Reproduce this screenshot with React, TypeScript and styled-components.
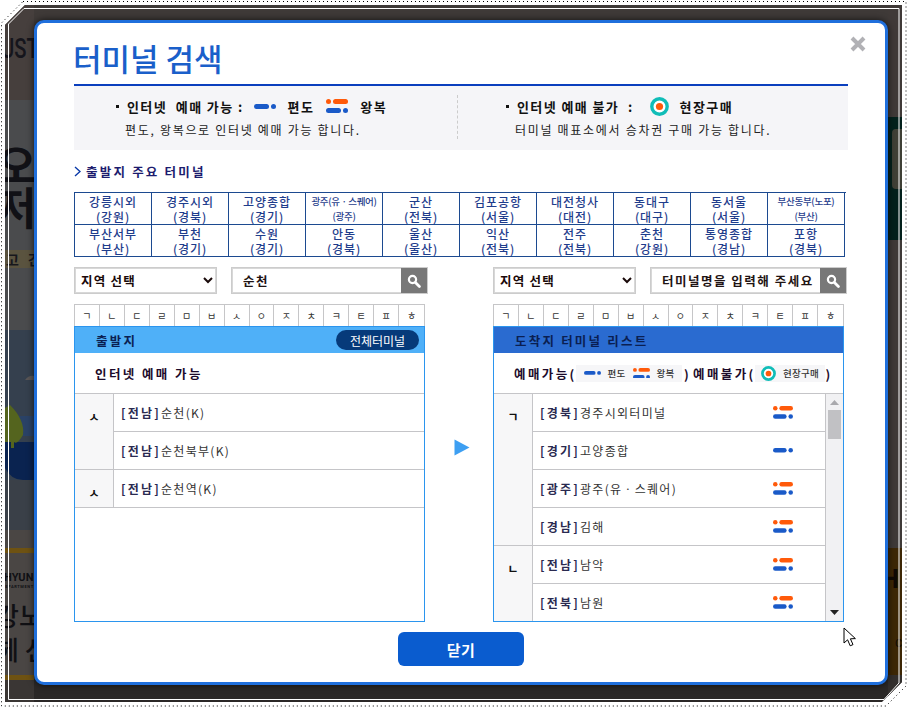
import React from 'react';
import styled, { createGlobalStyle } from 'styled-components';

const GlobalStyle = createGlobalStyle`
  html, body {
    margin: 0;
    padding: 0;
    background: #fff;
    overflow: hidden;
  }
  * {
    box-sizing: border-box;
  }
  body, select, input, button {
    font-family: 'Noto Sans CJK KR', 'Noto Sans', sans-serif;
  }
`;

const BLUE = '#1a5ac8';
const ORANGE = '#ff5a0a';

const originGrid = [
  ['강릉시외', '(강원)'],
  ['경주시외', '(경북)'],
  ['고양종합', '(경기)'],
  ['광주(유ㆍ스퀘어)', '(광주)', 'small'],
  ['군산', '(전북)'],
  ['김포공항', '(서울)'],
  ['대전청사', '(대전)'],
  ['동대구', '(대구)'],
  ['동서울', '(서울)'],
  ['부산동부(노포)', '(부산)', 'small'],
  ['부산서부', '(부산)'],
  ['부천', '(경기)'],
  ['수원', '(경기)'],
  ['안동', '(경북)'],
  ['울산', '(울산)'],
  ['익산', '(전북)'],
  ['전주', '(전북)'],
  ['춘천', '(강원)'],
  ['통영종합', '(경남)'],
  ['포항', '(경북)'],
];

const consonants = ['ㄱ', 'ㄴ', 'ㄷ', 'ㄹ', 'ㅁ', 'ㅂ', 'ㅅ', 'ㅇ', 'ㅈ', 'ㅊ', 'ㅋ', 'ㅌ', 'ㅍ', 'ㅎ'];

const departures = [
  { letter: 'ㅅ', rows: [['[전남]', '순천(K)'], ['[전남]', '순천북부(K)']] },
  { letter: 'ㅅ', rows: [['[전남]', '순천역(K)']] },
];

const arrivals = [
  {
    letter: 'ㄱ',
    rows: [
      ['[경북]', '경주시외터미널', 'both'],
      ['[경기]', '고양종합', 'one'],
      ['[광주]', '광주(유ㆍ스퀘어)', 'both'],
      ['[경남]', '김해', 'both'],
    ],
  },
  {
    letter: 'ㄴ',
    rows: [
      ['[전남]', '남악', 'both'],
      ['[전북]', '남원', 'both'],
    ],
  },
];

const OneWayIcon = ({ width = 22 }: { width?: number }) => (
  <svg width={width} height={(width * 5) / 22} viewBox="0 0 22 5">
    <rect x="0" y="0" width="15" height="5" rx="2.5" fill={BLUE} />
    <circle cx="19.5" cy="2.5" r="2.5" fill={BLUE} />
  </svg>
);

const RoundTripIcon = ({ width = 22 }: { width?: number }) => (
  <svg width={width} height={(width * 14) / 22} viewBox="0 0 22 14">
    <circle cx="2.5" cy="2.5" r="2.5" fill={ORANGE} />
    <rect x="7" y="0" width="15" height="5" rx="2.5" fill={ORANGE} />
    <rect x="0" y="9" width="15" height="5" rx="2.5" fill={BLUE} />
    <circle cx="19.5" cy="11.5" r="2.5" fill={BLUE} />
  </svg>
);

const OnSiteIcon = ({ size = 19 }: { size?: number }) => (
  <svg width={size} height={size} viewBox="0 0 19 19">
    <circle cx="9.5" cy="9.5" r="7.7" fill="#fff" stroke="#10bdb8" strokeWidth="3.4" />
    <circle cx="9.5" cy="9.5" r="3.6" fill={ORANGE} />
  </svg>
);

const SearchIcon = () => (
  <svg width="14" height="14" viewBox="0 0 14 14">
    <circle cx="5.5" cy="5.5" r="3.6" fill="none" stroke="#fff" strokeWidth="2.2" />
    <path d="M8.4 8.4 L12.4 12.4" stroke="#fff" strokeWidth="2.8" strokeLinecap="round" />
  </svg>
);

export default function App() {
  return (
    <Page>
      <GlobalStyle />
      <Frame>
        <SideStrip>
          <Band $h={95} $bg="#463f3d">
            <UstText>UST</UstText>
          </Band>
          <Band $h={150} $bg="#4a4b4d">
            <BigGlyph $top={38}>오</BigGlyph>
            <BigGlyph $top={-10}>저</BigGlyph>
          </Band>
          <Band $h={18} $bg="#5a533f">
            <TinyGlyph>고 간</TinyGlyph>
          </Band>
          <Band $h={62} $bg="#4a4b4d" />
          <Band $h={150} $bg="#35404e">
            <svg width="29" height="150" viewBox="0 0 29 150">
              <rect x="0" y="86" width="29" height="20" fill="#2a4266" />
              <path d="M0 112 H29 V150 H18 Q6 150 0 138 Z" fill="#0a2350" />
              <path d="M5 75 Q20 90 18 105 Q12 115 9 112 L9 118 H6 L6 112 H0 V78 Z" fill="#54641e" />
              <path d="M20 50 Q24 45 29 46 V50 Z" fill="#5a5656" />
            </svg>
          </Band>
          <Band $h={50} $bg="#3a4048" />
          <Band $h={150} $bg="#4a4644">
            <GoldLine />
            <HyunText>HYUN</HyunText>
            <DeptText>DEPARTMENT</DeptText>
            <BigKorean>강노</BigKorean>
            <BigKorean>헤 선</BigKorean>
            <GoldLine $bottom />
          </Band>
          <Band $h={22} $bg="#3a3634" />
        </SideStrip>
        <Modal>
          <CloseButton aria-label="닫기">
            <svg width="16" height="16" viewBox="0 0 16 16">
              <path d="M2 2 L14 14 M14 2 L2 14" stroke="#b1b1b5" strokeWidth="4" />
            </svg>
          </CloseButton>
          <Title>터미널 검색</Title>
          <InfoBand>
            <InfoColumn $pad={42}>
              <InfoHead>
                <Dot />
                <strong>인터넷 &nbsp;예매 가능 :</strong>
                <OneWayIcon />
                <strong>편도</strong>
                <RoundTripIcon />
                <strong>왕복</strong>
              </InfoHead>
              <InfoSub>편도, 왕복으로 인터넷 예매 가능 합니다.</InfoSub>
            </InfoColumn>
            <InfoColumn $pad={49} $divided>
              <InfoHead>
                <Dot />
                <strong>인터넷 예매 불가 &nbsp;:</strong>
                <IconGap>
                  <OnSiteIcon />
                </IconGap>
                <strong>현장구매</strong>
              </InfoHead>
              <InfoSub>터미널 매표소에서 승차권 구매 가능 합니다.</InfoSub>
            </InfoColumn>
          </InfoBand>
          <SectionLabel>
            <svg width="7" height="11" viewBox="0 0 7 11">
              <path d="M1 1 L6 5.5 L1 10" fill="none" stroke="#0b3aa8" strokeWidth="1.4" />
            </svg>
            출발지 주요 터미널
          </SectionLabel>
          <TerminalGrid>
            {originGrid.map(([name, region, small]) => (
              <TerminalCell key={name} $small={!!small}>
                <span>{name}</span>
                <span>{region}</span>
              </TerminalCell>
            ))}
          </TerminalGrid>
          <SearchRow>
            <SearchGroup>
              <RegionSelect defaultValue="">
                <option value="">지역 선택</option>
              </RegionSelect>
              <SearchBox>
                <SearchInput defaultValue="순천" />
                <SearchButton aria-label="검색">
                  <SearchIcon />
                </SearchButton>
              </SearchBox>
            </SearchGroup>
            <span />
            <SearchGroup>
              <RegionSelect defaultValue="">
                <option value="">지역 선택</option>
              </RegionSelect>
              <SearchBox>
                <SearchInput defaultValue="터미널명을 입력해 주세요" />
                <SearchButton aria-label="검색">
                  <SearchIcon />
                </SearchButton>
              </SearchBox>
            </SearchGroup>
          </SearchRow>
          <Panels>
            <Panel>
              <ConsonantRow>
                {consonants.map((c) => (
                  <ConsonantCell key={c}>{c}</ConsonantCell>
                ))}
              </ConsonantRow>
              <PanelBody>
                <PanelHeader $bg="#4fb0f8">
                  출발지
                  <AllButton>전체터미널</AllButton>
                </PanelHeader>
                <SubHeader>인터넷 예매 가능</SubHeader>
                {departures.map((group, i) => (
                  <LetterGroup key={i}>
                    <LetterCell>{group.letter}</LetterCell>
                    <div>
                      {group.rows.map(([region, name]) => (
                        <TerminalRow key={name}>
                          <span>
                            <b>{region}</b>
                            {name}
                          </span>
                        </TerminalRow>
                      ))}
                    </div>
                  </LetterGroup>
                ))}
              </PanelBody>
            </Panel>
            <ArrowColumn>
              <svg width="16" height="17" viewBox="0 0 16 17">
                <path d="M0.5 0.5 L15.5 8.5 L0.5 16.5 Z" fill="#3d9ff2" />
              </svg>
            </ArrowColumn>
            <Panel>
              <ConsonantRow>
                {consonants.map((c) => (
                  <ConsonantCell key={c}>{c}</ConsonantCell>
                ))}
              </ConsonantRow>
              <PanelBody>
                <PanelHeader $bg="#2a6bd0">도착지 터미널 리스트</PanelHeader>
                <LegendHeader>
                  <LegendText $w={62}>예매가능(</LegendText>
                  <LegendPill $w={106}>
                    <OneWayIcon width={17} />
                    <em>편도</em>
                    <RoundTripIcon width={17} />
                    <em>왕복</em>
                  </LegendPill>
                  <LegendText $w={11}>)</LegendText>
                  <LegendText $w={62}>예매불가(</LegendText>
                  <LegendPill $w={70}>
                    <OnSiteIcon size={15} />
                    <em>현장구매</em>
                  </LegendPill>
                  <LegendText $w={8}>)</LegendText>
                </LegendHeader>
                <ScrollArea>
                  <ScrollList>
                    {arrivals.map((group) => (
                      <LetterGroup key={group.letter}>
                        <LetterCell>{group.letter}</LetterCell>
                        <div>
                          {group.rows.map(([region, name, kind]) => (
                            <TerminalRow key={name} $between>
                              <span>
                                <b>{region}</b>
                                {name}
                              </span>
                              <RowIcon>{kind === 'both' ? <RoundTripIcon width={20} /> : <OneWayIcon width={20} />}</RowIcon>
                            </TerminalRow>
                          ))}
                        </div>
                      </LetterGroup>
                    ))}
                  </ScrollList>
                  <Scrollbar>
                    <svg width="9" height="5" viewBox="0 0 9 5">
                      <path d="M0 5 L4.5 0 L9 5 Z" fill="#a9a9ad" />
                    </svg>
                    <ScrollThumb />
                    <ScrollSpacer />
                    <svg width="9" height="5" viewBox="0 0 9 5">
                      <path d="M0 0 L4.5 5 L9 0 Z" fill="#222" />
                    </svg>
                  </Scrollbar>
                </ScrollArea>
              </PanelBody>
            </Panel>
          </Panels>
          <Footer>
            <CloseAction>닫기</CloseAction>
          </Footer>
          <Cursor viewBox="0 0 14 20" width="14" height="20">
            <path d="M1 1 L1 16 L4.6 12.8 L7.2 18.8 L10 17.6 L7.4 11.8 L12.4 11.6 Z" fill="#fff" stroke="#000" strokeWidth="1" />
          </Cursor>
        </Modal>
        <SideStrip>
          <Band $h={112} $bg="#403a38" />
          <Band $h={123} $bg="#03211c">
            <GreenCard />
          </Band>
          <Band $h={308} $bg="#3f3a38" />
          <Band $h={127} $bg="#3d2705">
            <SideH>H</SideH>
            <SideCo>CO</SideCo>
          </Band>
          <Band $h={27} $bg="#332f2d" />
        </SideStrip>
        <FrameLine viewBox="0 0 897 697" width="897" height="697">
          <path d="M19 3.5 H894 V678 L879 694.5 H3.5 V19 Z" fill="none" stroke="#fff" strokeWidth="1" />
        </FrameLine>
      </Frame>
      <DottedEdge viewBox="0 0 908 708" width="908" height="708">
        <path d="M23 1.5 H906 V686 L886 706 H1.5 V23 Z" fill="none" stroke="#000" strokeWidth="1" strokeDasharray="1 3" />
      </DottedEdge>
    </Page>
  );
}

const Page = styled.div`
  position: relative;
  width: 908px;
  height: 708px;
  padding: 5px;
  overflow: hidden;
  background: #fff;
`;

const DottedEdge = styled.svg`
  position: absolute;
  left: 0;
  top: 0;
  pointer-events: none;
`;

const Frame = styled.div`
  position: relative;
  display: grid;
  grid-template-columns: 29px 854px 14px;
  width: 897px;
  height: 697px;
  background: linear-gradient(#3f3a38 0 50%, #2b2827 50%);
  clip-path: polygon(20px 0, 100% 0, 100% calc(100% - 20px), calc(100% - 20px) 100%, 0 100%, 0 20px);
`;

const FrameLine = styled.svg`
  position: absolute;
  left: 0;
  top: 0;
  z-index: 3;
  pointer-events: none;
`;

const SideStrip = styled.div`
  display: flex;
  flex-direction: column;
  overflow: hidden;
`;

const Band = styled.div<{ $h: number; $bg: string }>`
  position: relative;
  flex: none;
  height: ${(p) => p.$h}px;
  background: ${(p) => p.$bg};
  overflow: hidden;
  color: #17171c;
`;

const UstText = styled.div`
  margin: 26px 0 0 -4px;
  font: 500 28px/36px 'Roboto', sans-serif;
  color: #15151c;
  white-space: nowrap;
  transform: scaleX(0.72);
  transform-origin: left center;
`;

const BigGlyph = styled.div<{ $top: number }>`
  margin: ${(p) => p.$top}px 0 0 -9px;
  font-size: 44px;
  line-height: 52px;
  font-weight: 700;
  color: #111116;
  white-space: nowrap;
`;

const TinyGlyph = styled.div`
  margin-left: 1px;
  font-size: 14px;
  line-height: 18px;
  font-weight: 700;
  letter-spacing: 3px;
  white-space: nowrap;
`;

const GoldLine = styled.div<{ $bottom?: boolean }>`
  height: 5px;
  margin-top: ${(p) => (p.$bottom ? 9 : 18)}px;
  background: #6e5212;
`;

const HyunText = styled.div`
  margin: 19px 0 0 -1px;
  font: 700 11px/12px 'Roboto', sans-serif;
  letter-spacing: 0.2px;
  white-space: nowrap;
  color: #101014;
`;

const DeptText = styled.div`
  margin: 0 0 9px -3px;
  font: 700 4px/5px 'Roboto', sans-serif;
  letter-spacing: 0.6px;
  white-space: nowrap;
  color: #101014;
`;

const BigKorean = styled.div`
  margin-left: -10px;
  font-size: 26px;
  line-height: 34px;
  font-weight: 500;
  white-space: nowrap;
  color: #101014;
`;

const GreenCard = styled.div`
  width: 20px;
  height: 60px;
  margin: 12px 0 0 4px;
  background: #3f4036;
  border-radius: 4px 0 0 4px;
`;

const SideH = styled.div`
  margin: 14px 0 0 -8px;
  font-size: 26px;
  line-height: 30px;
  font-weight: 700;
  color: #0f0a04;
`;

const SideCo = styled.div`
  margin: 46px 0 0 7px;
  font: 400 11px/11px 'Roboto', sans-serif;
  color: #0f0a04;
  white-space: nowrap;
`;

const Modal = styled.div`
  position: relative;
  z-index: 1;
  display: flex;
  flex-direction: column;
  height: 665px;
  margin-top: 15px;
  padding: 0 37px;
  background: #fff;
  border: 3px solid #1f6fdc;
  border-radius: 10px;
  box-shadow: 0 0 7px rgba(0, 0, 0, 0.7);
`;

const CloseButton = styled.button`
  position: absolute;
  right: 19px;
  top: 13px;
  display: flex;
  padding: 0;
  border: 0;
  background: none;
`;

const Title = styled.h1`
  flex: none;
  height: 63px;
  margin: 0;
  padding-top: 12px;
  font-size: 31px;
  line-height: 46px;
  font-weight: 500;
  color: #1a5fca;
  text-indent: -1px;
  border-bottom: 2px solid #0a3fbe;
`;

const InfoBand = styled.div`
  flex: none;
  display: grid;
  grid-template-columns: 383px 391px;
  height: 64px;
  background: #f5f5f8;
`;

const InfoColumn = styled.div<{ $pad: number; $divided?: boolean }>`
  position: relative;
  padding: 8px 0 0 ${(p) => p.$pad}px;

  ${(p) =>
    p.$divided &&
    `&::before {
      content: '';
      position: absolute;
      left: 0;
      top: 9px;
      bottom: 11px;
      border-left: 1px dashed #ccc;
    }`}
`;

const InfoHead = styled.div`
  display: flex;
  align-items: center;
  gap: 12px;
  height: 24px;
  font-size: 13px;
  color: #111;

  > strong {
    font-weight: 700;
    letter-spacing: 1.4px;
    white-space: nowrap;
  }

  > strong:first-of-type {
    margin-right: -2px;
  }
`;

const IconGap = styled.span`
  display: flex;
  margin-left: 6px;
  margin-right: -1px;
`;

const Dot = styled.i`
  width: 3px;
  height: 3px;
  margin-right: -4px;
  background: #111;
`;

const InfoSub = styled.div`
  margin: 3px 0 0 9px;
  font-size: 12px;
  line-height: 18px;
  letter-spacing: 1.7px;
  color: #222;
  white-space: nowrap;
`;

const SectionLabel = styled.div`
  flex: none;
  display: flex;
  align-items: center;
  gap: 5px;
  height: 42px;
  font-size: 12.5px;
  font-weight: 700;
  letter-spacing: 2.2px;
  color: #1c1c6e;
`;

const TerminalGrid = styled.div`
  flex: none;
  display: grid;
  grid-template-columns: repeat(10, 77px);
  grid-auto-rows: 32px;
  width: 772px;
  border-left: 1px solid #1c4a90;
  border-top: 1px solid #1c4a90;
`;

const TerminalCell = styled.div<{ $small: boolean }>`
  display: flex;
  flex-direction: column;
  align-items: center;
  justify-content: center;
  border-right: 1px solid #1c4a90;
  border-bottom: 1px solid #1c4a90;
  font-size: ${(p) => (p.$small ? 9.5 : 12)}px;
  font-weight: 500;
  line-height: 15px;
  letter-spacing: ${(p) => (p.$small ? -0.3 : 0.9)}px;
  color: #1f3d8c;
  white-space: nowrap;
`;

const SearchRow = styled.div`
  flex: none;
  display: grid;
  grid-template-columns: 354px 65px 354px;
  margin-top: 10px;
`;

const SearchGroup = styled.div`
  display: flex;
  justify-content: space-between;
`;

const RegionSelect = styled.select`
  width: 143px;
  height: 27px;
  padding-left: 2px;
  border: 1px solid #ccc;
  box-shadow: inset 0 0 0 1px #d8d8d8;
  background: #fff;
  font-size: 12.5px;
  font-weight: 700;
  letter-spacing: 1.2px;
  color: #1a0a0a;
`;

const SearchBox = styled.div`
  display: flex;
  width: 197px;
  height: 27px;
  border: 1px solid #ccc;
  box-shadow: inset 0 0 0 1px #d8d8d8;
`;

const SearchInput = styled.input`
  flex: 1;
  min-width: 0;
  padding: 0 0 0 11px;
  border: 0;
  outline: 0;
  background: transparent;
  font-size: 12.5px;
  font-weight: 700;
  letter-spacing: 1.5px;
  color: #1f1414;
`;

const SearchButton = styled.button`
  display: flex;
  align-items: center;
  justify-content: center;
  width: 26px;
  padding: 0;
  border: 0;
  background: #787878;
`;

const Panels = styled.div`
  flex: none;
  display: grid;
  grid-template-columns: 351px 68px 351px;
  margin-top: 10px;
`;

const Panel = styled.div`
  display: flex;
  flex-direction: column;
  height: 318px;
`;

const ConsonantRow = styled.div`
  flex: none;
  display: grid;
  grid-template-columns: repeat(14, 1fr);
  height: 22px;
  border: 1px solid #c6c6c8;
  border-bottom: 0;
`;

const ConsonantCell = styled.div`
  display: flex;
  align-items: center;
  justify-content: center;
  border-right: 1px solid #c6c6c8;
  font-size: 10px;
  color: #333;

  &:last-child {
    border-right: 0;
  }
`;

const PanelBody = styled.div`
  flex: 1;
  display: flex;
  flex-direction: column;
  min-height: 0;
  border: 1px solid #2b95ee;
`;

const PanelHeader = styled.div<{ $bg: string }>`
  display: flex;
  align-items: center;
  justify-content: space-between;
  flex: none;
  height: 26px;
  padding: 0 5px 0 21px;
  background: ${(p) => p.$bg};
  font-size: 12.5px;
  font-weight: 700;
  letter-spacing: 2.2px;
  color: #0a1f52;
`;

const AllButton = styled.button`
  height: 20px;
  width: 83px;
  padding: 0;
  border: 0;
  border-radius: 10px;
  background: #063a7a;
  font-size: 12px;
  letter-spacing: 0;
  color: #fff;
`;

const SubHeader = styled.div`
  display: flex;
  align-items: center;
  flex: none;
  height: 41px;
  padding-left: 20px;
  border-bottom: 1px solid #c5c5c8;
  font-size: 12.5px;
  font-weight: 700;
  letter-spacing: 2.4px;
  color: #1c0a2a;
`;

const LegendHeader = styled(SubHeader)`
  white-space: pre;
`;

const LegendText = styled.span<{ $w: number }>`
  flex: none;
  width: ${(p) => p.$w}px;
  text-align: center;
`;

const LegendPill = styled.div<{ $w: number }>`
  flex: none;
  display: flex;
  align-items: center;
  justify-content: center;
  gap: 7px;
  width: ${(p) => p.$w}px;
  height: 17px;
  background: #f6f6f8;

  > em {
    font-size: 9.5px;
    font-style: normal;
    font-weight: 500;
    letter-spacing: 0.2px;
    color: #333;
  }
`;

const LetterGroup = styled.div`
  display: grid;
  grid-template-columns: 39px 1fr;
`;

const LetterCell = styled.div`
  padding-top: 15px;
  background: #f7f7f8;
  border-right: 1px solid #c5c5c8;
  border-bottom: 1px solid #c5c5c8;
  text-align: center;
  font-size: 12px;
  line-height: 16px;
  font-weight: 700;
  color: #111;
`;

const TerminalRow = styled.div<{ $between?: boolean }>`
  display: flex;
  align-items: center;
  justify-content: ${(p) => (p.$between ? 'space-between' : 'flex-start')};
  height: 38px;
  padding-left: 7px;
  border-bottom: 1px solid #c5c5c8;
  font-size: 12px;
  letter-spacing: 1.3px;
  color: #333;
  white-space: nowrap;

  b {
    font-weight: 700;
    letter-spacing: 2.2px;
    color: #2a2a50;
  }
`;

const RowIcon = styled.span`
  display: flex;
  margin-right: 32px;
`;

const ArrowColumn = styled.div`
  padding: 133px 0 0 29px;
`;

const ScrollArea = styled.div`
  flex: 1;
  display: flex;
  min-height: 0;
  overflow: hidden;
`;

const ScrollList = styled.div`
  flex: 1;
  min-width: 0;
  border-right: 1px solid #c5c5c8;
`;

const Scrollbar = styled.div`
  display: flex;
  flex-direction: column;
  align-items: center;
  flex: none;
  width: 17px;
  padding: 6px 0;
  background: #f1f1f3;
`;

const ScrollThumb = styled.div`
  width: 13px;
  height: 29px;
  margin-top: 5px;
  background: #c1c1c4;
`;

const ScrollSpacer = styled.div`
  flex: 1;
`;

const Footer = styled.div`
  flex: none;
  display: flex;
  justify-content: center;
  margin-top: 10px;
`;

const CloseAction = styled.button`
  width: 126px;
  height: 34px;
  border: 0;
  border-radius: 6px;
  background: #0a5ccf;
  font-size: 15px;
  font-weight: 700;
  letter-spacing: 0.5px;
  color: #fff;
`;

const Cursor = styled.svg`
  position: absolute;
  left: 806px;
  top: 604px;
`;
